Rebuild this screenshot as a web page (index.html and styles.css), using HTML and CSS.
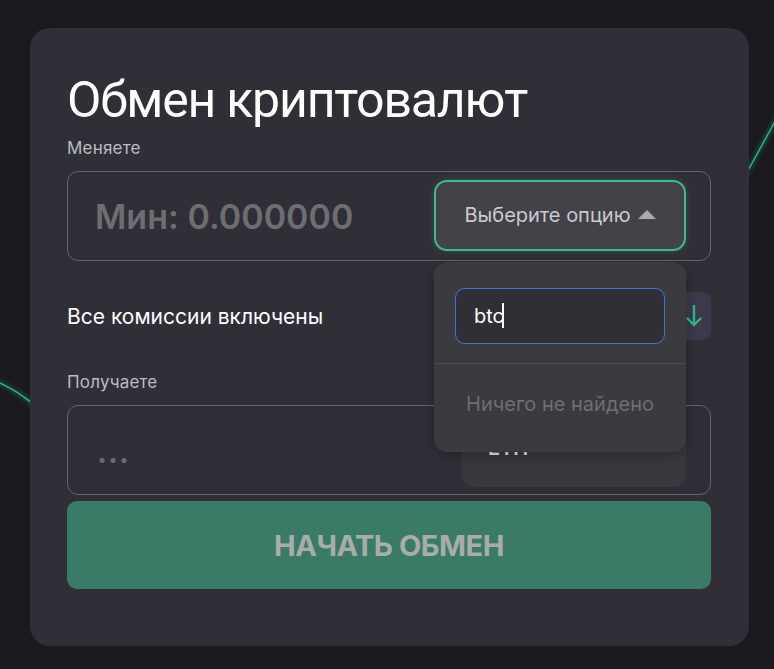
FILE: index.html
```html
<!DOCTYPE html>
<html lang="ru">
<head>
    <meta charset="UTF-8">
    <meta name="viewport" content="width=device-width, initial-scale=1.0">
    <title>Обмен криптовалют</title>
    <link rel="stylesheet" href="styles.css">
</head>
<body>

    <!-- Светящиеся линии на фоне -->
    <svg class="bg-lines" width="774" height="669" viewBox="0 0 774 669">
        <defs>
            <filter id="glow" x="-50%" y="-50%" width="200%" height="200%">
                <feGaussianBlur stdDeviation="2.5" result="b"/>
                <feMerge><feMergeNode in="b"/><feMergeNode in="SourceGraphic"/></feMerge>
            </filter>
        </defs>
        <path d="M-10 379 Q 16 388 40 410" fill="none" stroke="#2bbd8e" stroke-width="1.3" filter="url(#glow)"/>
        <path d="M745 176 L 790 94" fill="none" stroke="#2bbd8e" stroke-width="1.3" filter="url(#glow)"/>
    </svg>

    <div class="exchange-card">
        <h1>Обмен криптовалют</h1>

        <div class="field-label">Меняете</div>
        <div class="amount-field">
            <input type="text" class="amount-input" placeholder="Мин: 0.000000">
            <div class="select-wrap">
                <div class="select-button open">
                    <span>Выберите опцию</span>
                    <span class="caret-up"></span>
                </div>
                <div class="dropdown">
                    <div class="search-box">
                        <span class="search-text">btc</span><span class="text-cursor"></span>
                    </div>
                    <div class="dropdown-divider"></div>
                    <div class="empty-text">Ничего не найдено</div>
                </div>
            </div>
        </div>

        <div class="fee-row">
            <span>Все комиссии включены</span>
            <div class="swap-button">
                <svg width="16" height="22" viewBox="0 0 16 22">
                    <path d="M8 1 V20 M1.5 13.5 L8 20 L14.5 13.5" fill="none" stroke="#2fb98b" stroke-width="2.4" stroke-linecap="round" stroke-linejoin="round"/>
                </svg>
            </div>
        </div>

        <div class="field-label">Получаете</div>
        <div class="amount-field">
            <div class="amount-dots">...</div>
            <div class="select-button small">
                <span>ETH</span>
                <span class="caret-down"></span>
            </div>
        </div>

        <button class="start-button">НАЧАТЬ ОБМЕН</button>
    </div>

</body>
</html>
```

FILE: styles.css
```css
/* Общий фон страницы */
body {
    margin: 0;
    background-color: #19191f;
    font-family: Inter, "Noto Sans", sans-serif;
    position: relative;
    min-height: 669px;
    overflow: hidden;
}

.bg-lines {
    position: absolute;
    top: 0;
    left: 0;
    z-index: 0;
}

/* Карточка обмена */
.exchange-card {
    position: relative;
    z-index: 1;
    box-sizing: border-box;
    width: 719px;
    margin: 28px 0 0 30px;
    padding: 44px 38px 57px 37px;
    background-color: #302f38;
    border-radius: 20px;
}

.exchange-card h1 {
    margin: 0;
    font-family: Roboto, sans-serif;
    font-weight: 400;
    font-size: 50px;
    line-height: 56px;
    letter-spacing: -1.2px;
    color: #ffffff;
}

.field-label {
    font-size: 17px;
    line-height: 20px;
    letter-spacing: 0.2px;
    color: #bcbcc2;
    margin: 10px 0 13px;
}

.amount-field {
    display: flex;
    align-items: center;
    justify-content: space-between;
    box-sizing: border-box;
    height: 90px;
    padding: 0 24px 0 27px;
    border: 1px solid #65656c;
    border-radius: 11px;
}

.amount-input {
    width: 300px;
    background: transparent;
    border: none;
    outline: none;
    padding: 0;
    font-family: Inter, sans-serif;
    font-size: 34px;
    font-weight: 600;
    color: #fff;
}

.amount-input::placeholder {
    color: #6d6d72;
}

.amount-dots {
    font-size: 30px;
    font-weight: 700;
    color: #6a6a70;
    letter-spacing: 1px;
    padding: 4px 0 0 2px;
}

/* Кнопка выбора валюты */
.select-wrap {
    position: relative;
    margin-top: -2px;
}

.select-button {
    display: flex;
    align-items: center;
    justify-content: center;
    gap: 7px;
    box-sizing: border-box;
    width: 252px;
    height: 71px;
    background-color: #424248;
    border-radius: 13px;
    font-size: 20px;
    color: #cacacf;
}

.select-button.open {
    border: 2.5px solid #3cba95;
    box-shadow: 0 0 6px rgba(60, 186, 149, 0.25);
}

.select-button.small {
    width: 224px;
    height: 73px;
    background-color: #38383e;
    justify-content: space-between;
    padding: 0 38px 4px 26px;
    color: #e6e6e6;
    font-weight: 600;
}

.caret-up {
    width: 0;
    height: 0;
    border-left: 9px solid transparent;
    border-right: 9px solid transparent;
    border-bottom: 9px solid #a9a9ae;
    margin-bottom: 2px;
}

.caret-down {
    width: 0;
    height: 0;
    border-left: 6px solid transparent;
    border-right: 6px solid transparent;
    border-top: 6px solid #a9a9ae;
}

/* Выпадающий список */
.dropdown {
    position: absolute;
    top: 82px;
    left: 0;
    z-index: 5;
    box-sizing: border-box;
    width: 252px;
    height: 190px;
    padding-top: 26px;
    background-color: #3a3a3f;
    border-radius: 13px;
    box-shadow: 0 4px 14px rgba(0, 0, 0, 0.25);
}

.search-box {
    display: flex;
    align-items: center;
    box-sizing: border-box;
    width: 210px;
    height: 56px;
    margin: 0 auto;
    padding-left: 18px;
    background-color: #2f2f35;
    border: 1px solid #3f75cc;
    border-radius: 10px;
    font-size: 20px;
    color: #fff;
}

.text-cursor {
    width: 1.5px;
    height: 25px;
    background-color: #fff;
    margin-left: -2px;
}

.dropdown-divider {
    height: 1px;
    margin: 19px 2px 0;
    background-color: #4d4d53;
}

.empty-text {
    margin-top: 28px;
    text-align: center;
    font-size: 20px;
    color: #6e6e75;
}

/* Строка с комиссией и кнопкой смены направления */
.fee-row {
    display: flex;
    align-items: center;
    justify-content: space-between;
    margin: 31px 0 32px;
    font-size: 21px;
    color: #fff;
}

.swap-button {
    display: flex;
    align-items: center;
    justify-content: center;
    width: 34px;
    height: 48px;
    background-color: #3b3a4c;
    border-radius: 9px;
}

/* Главная кнопка */
.start-button {
    display: block;
    width: 100%;
    height: 88px;
    margin-top: 6px;
    border: none;
    border-radius: 10px;
    background-color: #3a7b68;
    font-family: Inter, sans-serif;
    font-weight: 700;
    font-size: 29px;
    letter-spacing: -0.5px;
    color: #a9aca9;
}
```
